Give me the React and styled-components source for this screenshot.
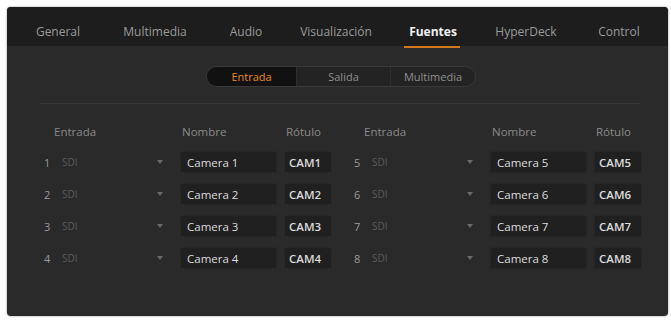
import React from "react";
import styled, { createGlobalStyle } from "styled-components";

const Global = createGlobalStyle`
  html, body { margin: 0; padding: 0; background: #ffffff; }
  body { font-family: "Open Sans", "Noto Sans", sans-serif; }
  * { box-sizing: border-box; }
`;

const Page = styled.div`
  width: 671px;
  height: 320px;
  padding: 7px 3px 4px 7px;
`;

const Panel = styled.div`
  width: 661px;
  height: 309px;
  background: #2a2a2a;
  border-radius: 4px;
  overflow: hidden;
  box-shadow: 0 0 2px rgba(0,0,0,0.5);
  display: flex;
  flex-direction: column;
`;

const TabBar = styled.div`
  height: 39px;
  background: #1d1d1d;
  display: flex;
  align-items: stretch;
  padding: 0 0 0 4px;
`;

const Tab = styled.div`
  width: ${p => p.$w}px;
  display: flex;
  justify-content: center;
  align-items: center;
  padding-top: 9px;
  font-size: 12px;
  color: ${p => (p.$active ? "#f0f0f0" : "#9a9a9a")};
  font-weight: ${p => (p.$active ? 700 : 400)};
`;

const TabLabel = styled.span`
  position: relative;
  &::after {
    content: "";
    display: ${p => (p.$active ? "block" : "none")};
    position: absolute;
    left: -5px;
    right: -3px;
    bottom: -8px;
    height: 2px;
    background: #d2791a;
  }
`;

const Body = styled.div`
  flex: 1;
  display: flex;
  flex-direction: column;
  padding: 20px 28px 0 33px;
`;

const SegWrap = styled.div`
  align-self: center;
  margin-left: 2px;
  display: flex;
  height: 21px;
  border-radius: 11px;
  background: #232323;
  border: 1px solid #3a3a3a;
  overflow: hidden;
`;

const Seg = styled.div`
  width: ${p => p.$w}px;
  display: flex;
  align-items: center;
  justify-content: center;
  font-size: 11px;
  color: ${p => (p.$active ? "#e88a22" : "#8f8f8f")};
  background: ${p => (p.$active ? "#111111" : "transparent")};
  border-right: ${p => (p.$last ? "none" : "1px solid #2e2e2e")};
`;

const Divider = styled.div`
  height: 1px;
  background: #383838;
  margin: 16px 0 0 0;
`;

const Columns = styled.div`
  display: grid;
  grid-template-columns: 292px 292px;
  column-gap: 18px;
  margin-top: 17px;
  margin-left: 1px;
`;

const Group = styled.div`
  display: grid;
  grid-template-columns: 16px 113px 97px 50px;
  column-gap: 5px;
  row-gap: 10px;
  align-items: center;
`;

const Head = styled.div`
  font-size: 11.5px;
  color: #8a8a8a;
  height: 20px;
  display: flex;
  align-items: center;
  grid-column: ${p => p.$col};
  padding-left: ${p => p.$pl || 0}px;
`;

const Num = styled.div`
  font-size: 11px;
  color: #9a9a9a;
  padding-left: 3px;
`;

const Select = styled.div`
  height: 22px;
  display: flex;
  align-items: center;
  justify-content: space-between;
  padding: 0 12px 0 0;
  font-size: 10px;
  color: #5a5a5a;
`;

const Arrow = styled.span`
  width: 0;
  height: 0;
  border-left: 3px solid transparent;
  border-right: 3px solid transparent;
  border-top: 4px solid #6a6a6a;
`;

const Field = styled.div`
  height: 22px;
  background: #202020;
  border: 1px solid #262626;
  border-radius: 2px;
  display: flex;
  align-items: center;
  padding-left: ${p => p.$pl}px;
  font-size: 11.5px;
  color: #dcdcdc;
  font-weight: ${p => (p.$bold ? 600 : 400)};
  margin-left: ${p => p.$ml || 0}px;
`;

const tabs = [
  ["General", 94],
  ["Multimedia", 100],
  ["Audio", 82],
  ["Visualización", 98],
  ["Fuentes", 96],
  ["HyperDeck", 90],
  ["Control", 96],
];

function Rows({ start }) {
  const out = [
    <Head key="h1" $col="1 / span 2" $pl={13}>Entrada</Head>,
    <Head key="h2" $col="3" $pl={2}>Nombre</Head>,
    <Head key="h3" $col="4" $pl={4}>Rótulo</Head>,
  ];
  for (let i = 0; i < 4; i++) {
    const n = start + i;
    out.push(
      <Num key={"n" + n}>{n}</Num>,
      <Select key={"s" + n}><span>SDI</span><Arrow /></Select>,
      <Field key={"f" + n} $pl={6}>Camera {n}</Field>,
      <Field key={"r" + n} $pl={4} $ml={2} $bold>CAM{n}</Field>
    );
  }
  return <Group>{out}</Group>;
}

export default function App() {
  return (
    <Page>
      <Global />
      <Panel>
        <TabBar>
          {tabs.map(([t, w]) => (
            <Tab key={t} $w={w} $active={t === "Fuentes"}>
              <TabLabel $active={t === "Fuentes"}>{t}</TabLabel>
            </Tab>
          ))}
        </TabBar>
        <Body>
          <SegWrap>
            <Seg $w={90} $active>Entrada</Seg>
            <Seg $w={94}>Salida</Seg>
            <Seg $w={84} $last>Multimedia</Seg>
          </SegWrap>
          <Divider />
          <Columns>
            <Rows start={1} />
            <Rows start={5} />
          </Columns>
        </Body>
      </Panel>
    </Page>
  );
}
